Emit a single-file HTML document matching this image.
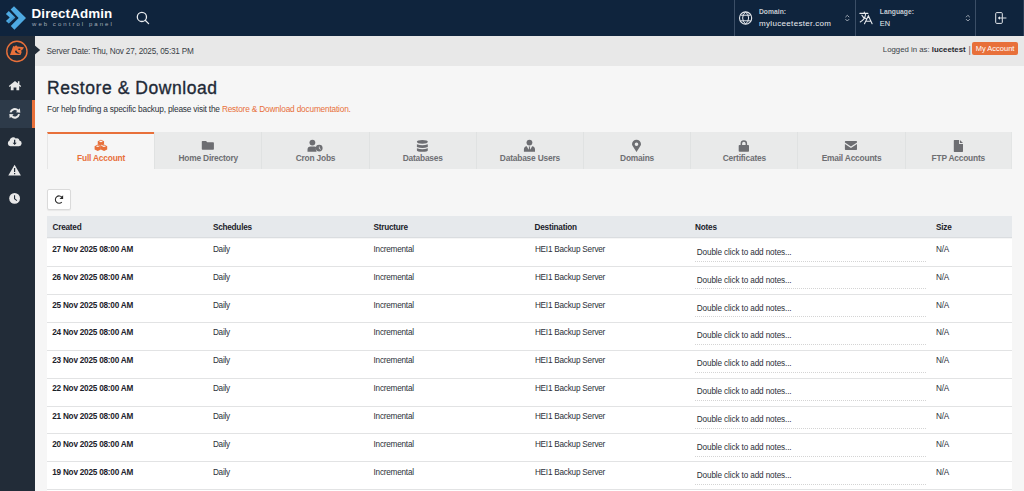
<!DOCTYPE html>
<html><head><meta charset="utf-8">
<style>
*{margin:0;padding:0;box-sizing:border-box}
html,body{width:1024px;height:491px;overflow:hidden;background:#f6f6f6;font-family:"Liberation Sans",sans-serif;color:#1f2731}
svg{position:absolute;overflow:visible}
#hdr{position:absolute;left:0;top:0;width:1024px;height:36px;background:#0f243d}
#side{position:absolute;left:0;top:36px;width:35px;height:455px;background:#222c38}
#sub{position:absolute;left:35px;top:36px;width:989px;height:30px;background:#e8e8e8}
.t{position:absolute;white-space:pre;line-height:1}
.sep{position:absolute;top:0;width:1px;height:36px;background:#3b4e66}
#tabs{position:absolute;left:47px;top:132px;width:965px;height:37px;background:#e9eaea}
.tab{position:absolute;top:0;height:37px;width:107.2px;border-left:1px solid #e0e2e2}
.lbl{position:absolute;left:0;width:100%;top:22.2px;text-align:center;font-size:8.4px;letter-spacing:-0.2px;font-weight:bold;color:#6e6f73;line-height:1;white-space:pre}
.row{position:absolute;left:47px;width:965px;height:27px}
.c{position:absolute;white-space:pre;font-size:8.2px;letter-spacing:-0.22px;line-height:1;color:#2b3038}
.b{font-weight:bold;color:#1c222a}
.note{position:absolute;left:648px;top:10px;width:231px;height:13px;border-bottom:1px dotted #d4d4d4}
</style></head><body>
<div id="hdr">
  <svg width="36" height="36" style="left:0;top:0" viewBox="0 0 36 36">
    <polygon points="14,6.2 26,18 14.4,29.7 10.8,26 18.6,18 10.6,9.6" fill="#4eaae2"/>
    <polygon points="8.8,11 15.3,17.6 8.8,23.4 5.9,21 9.7,17.4 5.9,14" fill="#4eaae2"/>
    <polygon points="8.8,23.4 15.3,17.6 13.7,16.4 8.2,21.2" fill="#3b8cc4" opacity="0.6"/>
  </svg>
  <div class="t" style="left:31.6px;top:7.4px;font-size:13.4px;font-weight:bold;color:#fff;letter-spacing:0.1px">DirectAdmin</div>
  <div class="t" style="left:32px;top:21.3px;font-size:6px;color:#a3acb7;letter-spacing:2.05px">web control panel</div>
  <svg width="20" height="20" style="left:132px;top:7px" viewBox="132 7 20 20">
    <circle cx="141.9" cy="16.9" r="4.6" fill="none" stroke="#e9ecef" stroke-width="1.3"/>
    <line x1="145.2" y1="20.2" x2="148.6" y2="23.6" stroke="#e9ecef" stroke-width="1.3" stroke-linecap="round"/>
  </svg>
  <div class="sep" style="left:734px"></div>
  <div class="sep" style="left:855px"></div>
  <div class="sep" style="left:975px"></div>
  <div class="sep" style="left:1023px;background:#2a3d55"></div>
  <svg width="16" height="16" style="left:738px;top:10px" viewBox="738 10 16 16">
    <circle cx="745.6" cy="18" r="6.1" fill="none" stroke="#e6e9ed" stroke-width="1.1"/>
    <path d="M740.6 15.2h10 M740.6 20.8h10 M745.6 11.9 Q742.6 14.5 742.6 18 Q742.6 21.5 745.6 24.1 M745.6 11.9 Q748.6 14.5 748.6 18 Q748.6 21.5 745.6 24.1" fill="none" stroke="#e6e9ed" stroke-width="1"/>
  </svg>
  <div class="t" style="left:759px;top:8.6px;font-size:6.75px;font-weight:bold;color:#c5cad2">Domain:</div>
  <div class="t" style="left:759px;top:19.7px;font-size:8px;letter-spacing:0.33px;color:#e9ecf0">myluceetester.com</div>
  <svg width="8" height="10" style="left:843px;top:14px" viewBox="843 14 8 10">
    <path d="M845.4 17.2 L847.3 15.3 L849.2 17.2 M845.4 19.1 L847.3 21 L849.2 19.1" fill="none" stroke="#aeb6c0" stroke-width="0.9"/>
  </svg>
  <svg width="16" height="16" style="left:858px;top:10px" viewBox="858 10 16 16">
    <path d="M859.9 13.4h8 M864.3 12v1.4 M865.6 13.6 Q865.4 19.6 860.2 21.9 M861.9 15.2 Q862.8 17.6 865.9 18.6 M864.5 23.8 L868.4 15.8 L872.1 23.8 M865.6 21.2h5.2" fill="none" stroke="#e6e9ed" stroke-width="1.1" stroke-linecap="round"/>
  </svg>
  <div class="t" style="left:879.8px;top:8.6px;font-size:6.75px;font-weight:bold;color:#c5cad2">Language:</div>
  <div class="t" style="left:879.8px;top:19.9px;font-size:7.4px;color:#e9ecf0">EN</div>
  <svg width="8" height="10" style="left:964px;top:14px" viewBox="964 14 8 10">
    <path d="M966 17.2 L967.9 15.3 L969.8 17.2 M966 19.1 L967.9 21 L969.8 19.1" fill="none" stroke="#aeb6c0" stroke-width="0.9"/>
  </svg>
  <svg width="16" height="16" style="left:993px;top:10px" viewBox="993 10 16 16">
    <rect x="995.7" y="12.6" width="6.6" height="10.8" rx="1" fill="none" stroke="#e6e9ed" stroke-width="1"/>
    <path d="M998.6 18h7.8" stroke="#c8ced6" stroke-width="1.1"/>
    <path d="M997.8 18 L1000 16.2 L1000 19.8z" fill="#e6e9ed"/>
  </svg>
</div>

<div id="side">
  <svg width="35" height="30" style="left:0;top:0" viewBox="0 36 35 30">
    <circle cx="16.9" cy="51.4" r="10.1" fill="none" stroke="#e8703a" stroke-width="1.4"/>
    <path d="M13.2 46.1 L14.6 46.6 L16.1 45.2 L17.4 46.4 L23.9 47.2 L22.9 49.2 L21.2 50.6 L21.6 52.6 L20.5 55 L10 55 Z" fill="#e8703a"/>
    <ellipse cx="19.3" cy="49.3" rx="1.25" ry="0.75" fill="#222c38"/>
    <path d="M14.9 50.8 Q14.9 54 19.8 53.7 Q19.4 53 18.6 52.8 Q16.9 52.5 16.6 50.6 Z" fill="#222c38"/>
  </svg>
  <div style="position:absolute;left:0;top:63.7px;width:35px;height:28.3px;background:#2d3a49"></div>
  <div style="position:absolute;left:32px;top:63.7px;width:3px;height:28.3px;background:#e8703a"></div>
  <svg width="35" height="180" style="left:0;top:36px" viewBox="0 72 35 180" fill="#e8e8e8">
    <!-- home -->
    <path d="M15 80.9 L21.2 86.1 L20.4 87 L19.2 86 L19.2 90.3 L16.4 90.3 L16.4 87.6 L13.6 87.6 L13.6 90.3 L10.8 90.3 L10.8 86 L9.6 87 L8.8 86.1 Z M17.9 81.3h1.5v3.6l-1.5-1.3z"/>
    <!-- refresh -->
    <path d="M9.6 112.3 A5.3 5.3 0 0 1 18.6 109.6 L19.9 108.3 L20.3 112.7 L15.9 112.3 L17.2 111 A3.4 3.4 0 0 0 11.5 112.6 Z M20 114.3 A5.3 5.3 0 0 1 11 117 L9.7 118.3 L9.3 113.9 L13.7 114.3 L12.4 115.6 A3.4 3.4 0 0 0 18.1 114 Z"/>
    <!-- cloud download -->
    <path d="M10.4 146.3 A3 3 0 0 1 9.6 140.6 A3.6 3.6 0 0 1 15.8 138.4 A2.6 2.6 0 0 1 19.4 140.4 A3 3 0 0 1 18.9 146.3 Z"/>
    <path d="M14 139.8h1.3v3h1.4l-2.05 2.1l-2.05-2.1h1.4z" fill="#222c38"/>
    <!-- warning -->
    <path d="M14.6 164.7 L20.9 175.5 L8.3 175.5 Z"/>
    <path d="M14 167.9h1.2v4.2h-1.2z M14 172.9h1.2v1.3h-1.2z" fill="#222c38"/>
    <!-- clock -->
    <circle cx="14.6" cy="198.4" r="5.4"/>
    <path d="M14 195.3h1.1v3.3l2.1 1.6l-0.6 0.8l-2.6-1.9z" fill="#222c38"/>
  </svg>
</div>

<div id="sub"></div>
<svg width="8" height="14" style="left:34px;top:43px;z-index:2" viewBox="34 43 8 14"><polygon points="34,44.8 40.2,50 34,55.2" fill="#222c38"/></svg>
<div id="sub2" style="position:absolute;left:35px;top:36px;width:989px;height:30px">
  <div class="t" style="left:11.6px;top:48.1px;margin-top:-36px;font-size:8.2px;letter-spacing:-0.2px;color:#3a3f47">Server Date: Thu, Nov 27, 2025, 05:31 PM</div>
  <div class="t" style="left:847.8px;top:10.2px;font-size:7.8px;color:#3a3f47">Logged in as: <b style="color:#1f252d">luceetest</b></div>
  <div class="t" style="left:933.6px;top:9.6px;font-size:9px;color:#60656c">|</div>
  <div style="position:absolute;left:937.3px;top:6px;width:45.5px;height:12.8px;background:#e8703a;border-radius:2px"></div>
  <div class="t" style="left:940.7px;top:8.7px;font-size:7.5px;color:#fff">My Account</div>
</div>

<div class="t" style="left:47.1px;top:79.9px;font-size:17.5px;letter-spacing:0.55px;color:#1f2a37;-webkit-text-stroke:0.35px #1f2a37">Restore &amp; Download</div>
<div class="t" style="left:47px;top:104.5px;font-size:8.3px;letter-spacing:-0.19px;color:#2c3139">For help finding a specific backup, please visit the <span style="color:#e8703a">Restore &amp; Download documentation.</span></div>

<div id="tabs">
  <div class="tab" style="left:0;background:#f6f6f6;border-left:1px solid #e6e6e6;border-top:2px solid #e8703a;top:0">
    <div class="lbl" style="top:20.2px;color:#e8703a">Full Account</div>
  </div>
  <div class="tab" style="left:107.2px"><div class="lbl">Home Directory</div></div>
  <div class="tab" style="left:214.4px"><div class="lbl">Cron Jobs</div></div>
  <div class="tab" style="left:321.6px"><div class="lbl">Databases</div></div>
  <div class="tab" style="left:428.8px"><div class="lbl">Database Users</div></div>
  <div class="tab" style="left:536px"><div class="lbl">Domains</div></div>
  <div class="tab" style="left:643.2px"><div class="lbl">Certificates</div></div>
  <div class="tab" style="left:750.4px"><div class="lbl">Email Accounts</div></div>
  <div class="tab" style="left:857.6px;width:107.4px;border-right:1px solid #e3e5e5"><div class="lbl">FTP Accounts</div></div>
</div>
<svg width="1024" height="20" style="left:0;top:135px" viewBox="0 135 1024 20">
  <!-- cubes -->
  <g fill="#e8703a">
    <path d="M100.90 139.70 L104.05 141.30 L104.05 144.50 L100.90 146.10 L97.75 144.50 L97.75 141.30 Z"/>
    <path d="M97.75 144.60 L100.90 146.20 L100.90 149.40 L97.75 151.00 L94.60 149.40 L94.60 146.20 Z"/>
    <path d="M104.05 144.60 L107.20 146.20 L107.20 149.40 L104.05 151.00 L100.90 149.40 L100.90 146.20 Z"/>
  </g>
  <g fill="#f6f6f6">
    <path d="M100.90 140.60 L102.85 141.40 L100.90 142.20 L98.95 141.40 Z"/>
    <path d="M97.75 145.50 L99.70 146.30 L97.75 147.10 L95.80 146.30 Z"/>
    <path d="M104.05 145.50 L106.00 146.30 L104.05 147.10 L102.10 146.30 Z"/>
    <path d="M100.9 144.6 L104.05 146.2 L104.05 146.9 L100.9 145.3 Z" opacity="0.9"/>
  </g>
  <g fill="#6d6e72">
    <!-- folder -->
    <path d="M201.8 141.6 Q201.8 140.9 202.5 140.9 L206 140.9 L207.3 142.2 L213.2 142.2 Q213.9 142.2 213.9 142.9 L213.9 149.1 Q213.9 149.8 213.2 149.8 L202.5 149.8 Q201.8 149.8 201.8 149.1 Z"/>
    <!-- user clock -->
    <circle cx="312.4" cy="142.6" r="2.9"/>
    <path d="M307.5 151.7 L307.5 149.6 Q307.5 146.4 310.7 146.4 L314.3 146.4 Q315.6 146.4 316.4 147 A4 4 0 0 0 316.6 151.7 Z"/>
    <circle cx="319.2" cy="148.1" r="3.4"/>
    <path d="M318.9 146.4h0.7v1.8l1.3 0.9l-0.4 0.6l-1.6-1.1z" fill="#e9eaea"/>
    <!-- database -->
    <path d="M416.9 141.8 Q416.9 139.9 422.35 139.9 Q427.8 139.9 427.8 141.8 Q427.8 143.7 422.35 143.7 Q416.9 143.7 416.9 141.8 Z"/>
    <path d="M416.9 144.2 Q422.35 146.4 427.8 144.2 L427.8 147 Q422.35 149 416.9 147 Z"/>
    <path d="M416.9 148.3 Q422.35 150.4 427.8 148.3 L427.8 150.2 Q427.8 151.7 422.35 151.7 Q416.9 151.7 416.9 150.2 Z"/>
    <!-- user tie -->
    <circle cx="529.45" cy="142.6" r="2.9"/>
    <path d="M523.9 151.7 L523.9 149.4 Q523.9 146.6 526.8 146.2 L528.6 149.8 L529 147.2 L528.7 146.4 L530.2 146.4 L529.9 147.2 L530.3 149.8 L532.1 146.2 Q535 146.6 535 149.4 L535 151.7 Z"/>
    <!-- marker -->
    <path d="M636.5 151.9 L633 146.6 Q632 145.1 632 144.2 A4.5 4.5 0 0 1 641 144.2 Q641 145.1 640 146.6 Z M636.5 142.4 A1.8 1.8 0 1 0 636.5 146 A1.8 1.8 0 1 0 636.5 142.4 Z" fill-rule="evenodd"/>
    <!-- lock -->
    <path d="M740.6 145 L740.6 143.6 A3.25 3.25 0 0 1 747.1 143.6 L747.1 145 L745.6 145 L745.6 143.6 A1.75 1.75 0 0 0 742.1 143.6 L742.1 145 Z"/>
    <rect x="738.7" y="145" width="10.3" height="6.7" rx="0.8"/>
    <!-- envelope -->
    <path d="M844.9 141.8 Q844.9 141.1 845.6 141.1 L856.3 141.1 Q857 141.1 857 141.8 L857 142.6 L850.95 146.6 L844.9 142.6 Z"/>
    <path d="M844.9 143.9 L850.95 147.9 L857 143.9 L857 149.2 Q857 149.9 856.3 149.9 L845.6 149.9 Q844.9 149.9 844.9 149.2 Z"/>
    <!-- file -->
    <path d="M953.8 140.5 Q953.8 139.9 954.4 139.9 L959 139.9 L959 143.4 Q959 144.1 959.7 144.1 L963 144.1 L963 151.3 Q963 151.9 962.4 151.9 L954.4 151.9 Q953.8 151.9 953.8 151.3 Z M959.9 139.9 L963 143.1 L959.9 143.1 Z"/>
  </g>
</svg>

<div style="position:absolute;left:47px;top:189px;width:24px;height:21px;background:#fff;border:1px solid #dadada;border-radius:2px;box-shadow:0 1px 1px rgba(0,0,0,0.06)"></div>
<svg width="12" height="12" style="left:53px;top:193px" viewBox="53 193 12 12">
  <path d="M62 197.3 A3.7 3.7 0 1 0 61.8 202.1" fill="none" stroke="#2a2a2a" stroke-width="1.05"/>
  <path d="M63.1 195.2 L63.1 198.9 L59.5 198.9 Z" fill="#2a2a2a"/>
</svg>

<div style="position:absolute;left:47px;top:216.2px;width:965px;height:22.3px;background:#e6e9ec;border-bottom:1.4px solid #dadde0"></div>
<div class="c b" style="left:52.5px;top:223.6px">Created</div>
<div class="c b" style="left:212.9px;top:223.6px">Schedules</div>
<div class="c b" style="left:373.5px;top:223.6px">Structure</div>
<div class="c b" style="left:534.6px;top:223.6px">Destination</div>
<div class="c b" style="left:695.1px;top:223.6px">Notes</div>
<div class="c b" style="left:936px;top:223.6px">Size</div>

<div id="rows">
<div style="position:absolute;left:47px;top:238.5px;width:965px;height:253px;background:#fff"></div>
<div style="position:absolute;left:47px;top:266.00px;width:965px;height:1px;background:#e2e3e4"></div>
<div style="position:absolute;left:47px;top:293.90px;width:965px;height:1px;background:#e2e3e4"></div>
<div style="position:absolute;left:47px;top:321.80px;width:965px;height:1px;background:#e2e3e4"></div>
<div style="position:absolute;left:47px;top:349.70px;width:965px;height:1px;background:#e2e3e4"></div>
<div style="position:absolute;left:47px;top:377.60px;width:965px;height:1px;background:#e2e3e4"></div>
<div style="position:absolute;left:47px;top:405.50px;width:965px;height:1px;background:#e2e3e4"></div>
<div style="position:absolute;left:47px;top:433.40px;width:965px;height:1px;background:#e2e3e4"></div>
<div style="position:absolute;left:47px;top:461.30px;width:965px;height:1px;background:#e2e3e4"></div>
<div style="position:absolute;left:47px;top:489.20px;width:965px;height:1px;background:#e2e3e4"></div>
<div class="row" style="top:238.50px"><div class="c b" style="left:5.2px;top:7.3px">27 Nov 2025 08:00 AM</div><div class="c" style="left:165.9px;top:7.3px">Daily</div><div class="c" style="left:326.5px;top:7.3px">Incremental</div><div class="c" style="left:487.9px;top:7.3px">HEI1 Backup Server</div><div class="note"></div><div class="c" style="left:649.8px;top:10.3px;font-size:8.2px;letter-spacing:-0.13px">Double click to add notes...</div><div class="c" style="left:889px;top:7.3px">N/A</div></div>
<div class="row" style="top:266.40px"><div class="c b" style="left:5.2px;top:7.3px">26 Nov 2025 08:00 AM</div><div class="c" style="left:165.9px;top:7.3px">Daily</div><div class="c" style="left:326.5px;top:7.3px">Incremental</div><div class="c" style="left:487.9px;top:7.3px">HEI1 Backup Server</div><div class="note"></div><div class="c" style="left:649.8px;top:10.3px;font-size:8.2px;letter-spacing:-0.13px">Double click to add notes...</div><div class="c" style="left:889px;top:7.3px">N/A</div></div>
<div class="row" style="top:294.30px"><div class="c b" style="left:5.2px;top:7.3px">25 Nov 2025 08:00 AM</div><div class="c" style="left:165.9px;top:7.3px">Daily</div><div class="c" style="left:326.5px;top:7.3px">Incremental</div><div class="c" style="left:487.9px;top:7.3px">HEI1 Backup Server</div><div class="note"></div><div class="c" style="left:649.8px;top:10.3px;font-size:8.2px;letter-spacing:-0.13px">Double click to add notes...</div><div class="c" style="left:889px;top:7.3px">N/A</div></div>
<div class="row" style="top:322.20px"><div class="c b" style="left:5.2px;top:7.3px">24 Nov 2025 08:00 AM</div><div class="c" style="left:165.9px;top:7.3px">Daily</div><div class="c" style="left:326.5px;top:7.3px">Incremental</div><div class="c" style="left:487.9px;top:7.3px">HEI1 Backup Server</div><div class="note"></div><div class="c" style="left:649.8px;top:10.3px;font-size:8.2px;letter-spacing:-0.13px">Double click to add notes...</div><div class="c" style="left:889px;top:7.3px">N/A</div></div>
<div class="row" style="top:350.10px"><div class="c b" style="left:5.2px;top:7.3px">23 Nov 2025 08:00 AM</div><div class="c" style="left:165.9px;top:7.3px">Daily</div><div class="c" style="left:326.5px;top:7.3px">Incremental</div><div class="c" style="left:487.9px;top:7.3px">HEI1 Backup Server</div><div class="note"></div><div class="c" style="left:649.8px;top:10.3px;font-size:8.2px;letter-spacing:-0.13px">Double click to add notes...</div><div class="c" style="left:889px;top:7.3px">N/A</div></div>
<div class="row" style="top:378.00px"><div class="c b" style="left:5.2px;top:7.3px">22 Nov 2025 08:00 AM</div><div class="c" style="left:165.9px;top:7.3px">Daily</div><div class="c" style="left:326.5px;top:7.3px">Incremental</div><div class="c" style="left:487.9px;top:7.3px">HEI1 Backup Server</div><div class="note"></div><div class="c" style="left:649.8px;top:10.3px;font-size:8.2px;letter-spacing:-0.13px">Double click to add notes...</div><div class="c" style="left:889px;top:7.3px">N/A</div></div>
<div class="row" style="top:405.90px"><div class="c b" style="left:5.2px;top:7.3px">21 Nov 2025 08:00 AM</div><div class="c" style="left:165.9px;top:7.3px">Daily</div><div class="c" style="left:326.5px;top:7.3px">Incremental</div><div class="c" style="left:487.9px;top:7.3px">HEI1 Backup Server</div><div class="note"></div><div class="c" style="left:649.8px;top:10.3px;font-size:8.2px;letter-spacing:-0.13px">Double click to add notes...</div><div class="c" style="left:889px;top:7.3px">N/A</div></div>
<div class="row" style="top:433.80px"><div class="c b" style="left:5.2px;top:7.3px">20 Nov 2025 08:00 AM</div><div class="c" style="left:165.9px;top:7.3px">Daily</div><div class="c" style="left:326.5px;top:7.3px">Incremental</div><div class="c" style="left:487.9px;top:7.3px">HEI1 Backup Server</div><div class="note"></div><div class="c" style="left:649.8px;top:10.3px;font-size:8.2px;letter-spacing:-0.13px">Double click to add notes...</div><div class="c" style="left:889px;top:7.3px">N/A</div></div>
<div class="row" style="top:461.70px"><div class="c b" style="left:5.2px;top:7.3px">19 Nov 2025 08:00 AM</div><div class="c" style="left:165.9px;top:7.3px">Daily</div><div class="c" style="left:326.5px;top:7.3px">Incremental</div><div class="c" style="left:487.9px;top:7.3px">HEI1 Backup Server</div><div class="note"></div><div class="c" style="left:649.8px;top:10.3px;font-size:8.2px;letter-spacing:-0.13px">Double click to add notes...</div><div class="c" style="left:889px;top:7.3px">N/A</div></div>
</div>
</body></html>
